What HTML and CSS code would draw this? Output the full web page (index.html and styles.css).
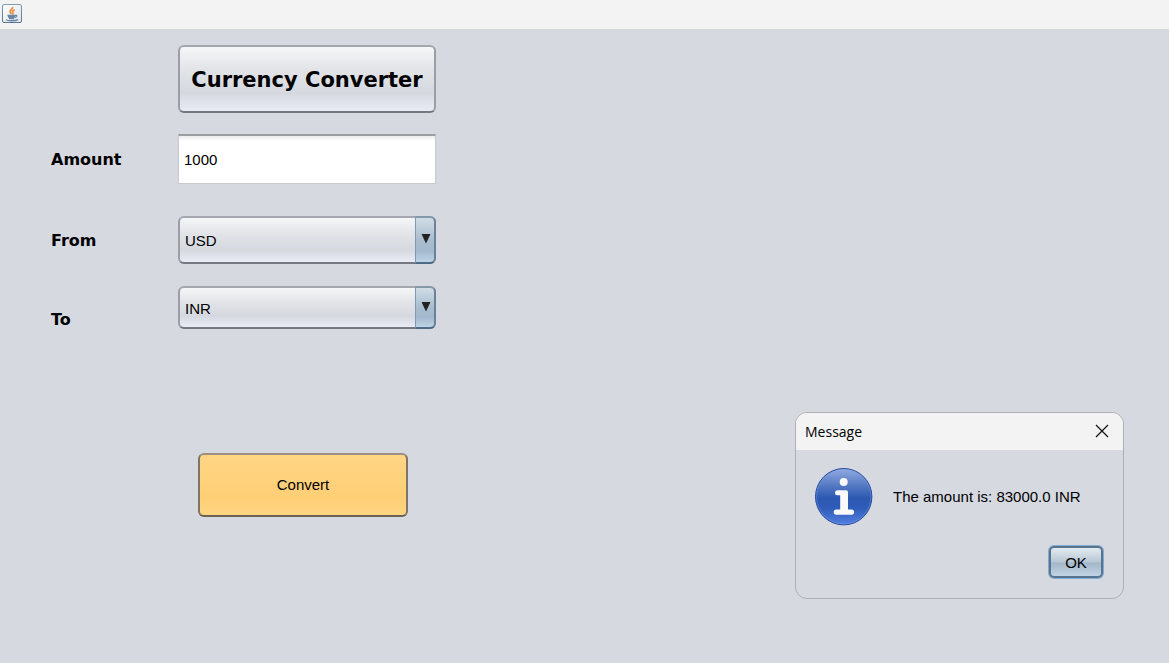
FILE: index.html
```html
<!DOCTYPE html>
<html lang="en">
<head>
<meta charset="utf-8">
<title>Currency Converter</title>
<link rel="stylesheet" href="styles.css">
</head>
<body>
<header class="titlebar">
  <svg class="java-icon" viewBox="0 0 20 20" aria-hidden="true">
    <defs>
      <linearGradient id="frame" x1="0" y1="0" x2="0" y2="1">
        <stop offset="0" stop-color="#7f9db5"/><stop offset="1" stop-color="#56758f"/>
      </linearGradient>
      <linearGradient id="face" x1="0" y1="0" x2="1" y2="1">
        <stop offset="0" stop-color="#ffffff"/><stop offset="1" stop-color="#dfe3e8"/>
      </linearGradient>
    </defs>
    <rect x="0.5" y="0.5" width="19" height="18" rx="1.5" fill="url(#face)" stroke="url(#frame)"/>
    <path d="M10.500 2.800C11.500 5 7.500 5.800 8 8C8.200 9 9.500 9.300 9.500 10.300M12.800 5.800C11 6.500 10 7.300 10.700 8.300C11.300 9.100 11 9.700 10.500 10.300" fill="none" stroke="#ea924a" stroke-width="1.800"/>
    <path d="M5.500 11.500h8M6 13h7M7 14.500h5M13 11.500c2.500-.8 2.500 1.500-.3 2.200M4 15.800c2 1.300 9 1.300 12-.2" fill="none" stroke="#6787a4" stroke-width="1.300"/>
  </svg>
</header>
<main class="workspace">
  <form class="converter">
    <button type="button" class="raised heading">Currency Converter</button>

    <label class="caption" for="amount">Amount</label>
    <input class="amount" id="amount" type="text" value="1000">

    <label class="caption caption-from" for="from">From</label>
    <div class="combo combo-from">
      <select class="raised" id="from"><option>USD</option><option>INR</option></select>
      <span class="combo-arrow"><svg viewBox="0 0 10 10" aria-hidden="true"><path d="M0.500 0H9.500L5 9.500Z"/></svg></span>
    </div>

    <label class="caption caption-to" for="to">To</label>
    <div class="combo combo-to">
      <select class="raised" id="to"><option>INR</option><option>USD</option></select>
      <span class="combo-arrow"><svg viewBox="0 0 10 10" aria-hidden="true"><path d="M0.500 0H9.500L5 9.500Z"/></svg></span>
    </div>

    <button type="button" class="raised convert">Convert</button>
  </form>

  <section class="dialog" role="dialog" aria-labelledby="dialog-title">
    <div class="dialog-bar">
      <h2 id="dialog-title">Message</h2>
      <button type="button" class="close" aria-label="Close"><svg viewBox="0 0 14 14" aria-hidden="true"><path d="M1 1L13 13M13 1L1 13"/></svg></button>
    </div>
    <div class="dialog-content">
      <svg class="info" viewBox="0 0 58 58" aria-hidden="true">
        <defs>
          <linearGradient id="blue" x1="0" y1="0" x2="0" y2="1">
            <stop offset="0" stop-color="#92abdf"/><stop offset="0.300" stop-color="#557ac4"/>
            <stop offset="0.520" stop-color="#2d59b2"/><stop offset="0.700" stop-color="#2f5cb8"/><stop offset="1" stop-color="#5280e0"/>
          </linearGradient>
        </defs>
        <circle cx="28.700" cy="28.700" r="28.200" fill="url(#blue)" stroke="#26489a"/>
        <circle cx="28.700" cy="28.700" r="27.200" fill="none" stroke="#7e9eea" stroke-opacity="0.450"/>
        <circle cx="28.700" cy="14" r="4" fill="#fafafa"/>
        <path d="M22.500 22.300H31a2 2 0 0 1 2 2V41.500H36.500a2.500 2.500 0 0 1 0 5.200H21.300a2.500 2.500 0 0 1 0-5.200H25.200V27.300H22.500a2.500 2.500 0 0 1 0-5Z" fill="#fafafa"/>
      </svg>
      <p>The amount is: 83000.0 INR</p>
    </div>
    <div class="dialog-actions">
      <button type="button" class="raised ok">OK</button>
    </div>
  </section>
</main>
</body>
</html>
```
FILE: styles.css
```css
* { box-sizing: border-box; }

body {
  margin: 0;
  min-height: 100vh;
  display: flex;
  flex-direction: column;
  background: #d6d9e0;
  color: #000;
  font: 15px/20px "Liberation Sans", Arial, sans-serif;
}

button, input, select { font: inherit; color: inherit; }

.titlebar {
  display: flex;
  height: 29px;
  padding: 4px 2px;
  background: #f3f3f3;
}
.java-icon { width: 20px; height: 20px; }

.workspace {
  flex: 1;
  display: flex;
  justify-content: space-between;
  align-items: flex-start;
  padding: 16px 45px 16px 51px;
}

.converter {
  display: grid;
  grid-template-columns: 127px 258px;
  align-items: center;
}

.raised {
  border: 2px solid;
  border-color: #a4a7ad #9b9ea4 #75787e #9b9ea4;
  border-radius: 6px;
  background: linear-gradient(#f5f6f7 0%, #e2e4e8 35%, #d5d8df 72%, #e9ecf5 100%);
}

.heading {
  grid-column: 2;
  height: 68px;
  margin-bottom: 21px;
  padding: 2px 0 0;
  font: bold 21px/28px "DejaVu Sans", Verdana, sans-serif;
}

.caption {
  padding-top: 2px;
  font: bold 16px/20px "DejaVu Sans", Verdana, sans-serif;
}
.caption-from { padding-top: 12px; }
.caption-to { padding-top: 24px; }

.amount {
  width: 100%;
  height: 50px;
  padding: 0 5px;
  border: 1px solid #c8cacf;
  border-top: 2px solid #9b9da1;
  background: linear-gradient(#ececec, #fff 5px);
}

.combo { position: relative; display: flex; }
.combo select {
  flex: 1;
  appearance: none;
  padding: 2px 24px 0 5px;
}
.combo-from { height: 48px; margin: 32px 0 22px; }
.combo-to { height: 43px; align-self: start; }

.combo-arrow {
  position: absolute;
  inset: 0 0 0 auto;
  width: 21px;
  display: flex;
  align-items: center;
  justify-content: center;
  padding: 0 0 2px 1px;
  border: 2px solid;
  border-color: #8498aa #6b8298 #4f6a84 #7f9bb4;
  border-left-width: 1px;
  border-radius: 0 6px 6px 0;
  background: linear-gradient(#d0dde7, #a9bdcf 50%, #a4b9cd 75%, #bcd3e8);
  pointer-events: none;
}
.combo-arrow svg { width: 10px; height: 10px; fill: #222; }

.convert {
  grid-column: 2;
  width: 210px;
  height: 64px;
  margin: 123px 0 0 20px;
  border-color: #9a9182 #7d7566 #6b6255 #7d7566;
  background: linear-gradient(#ffd584, #ffcf76 70%, #ffd582);
}

.dialog {
  width: 329px;
  margin-top: 367px;
  border: 1px solid #aeb0b4;
  border-radius: 12px;
  overflow: hidden;
}
.dialog-bar {
  display: flex;
  align-items: center;
  justify-content: space-between;
  height: 37px;
  padding: 0 14px 0 9px;
  background: #f3f3f3;
}
.dialog-bar h2 {
  margin: 0;
  font: 14px/20px "Open Sans", "Segoe UI", sans-serif;
}
.close {
  display: flex;
  padding: 0 0 2px;
  border: 0;
  background: none;
}
.close svg { width: 14px; height: 14px; fill: none; stroke: #111; stroke-width: 1.2; }

.dialog-content {
  display: flex;
  align-items: center;
  gap: 20px;
  padding: 18px 19px;
}
.dialog-content p { margin: 0; }
.info { width: 58px; height: 58px; }

.dialog-actions {
  display: flex;
  justify-content: flex-end;
  padding: 2px 20px 20px;
}
.ok {
  width: 54px;
  height: 32px;
  padding: 1px 0 0;
  border-color: #58748f;
  border-radius: 5px;
  box-shadow: 0 0 0 1px #7facd3;
  background: linear-gradient(#e4ebf1, #b9c8d5 48%, #a4b8ca 55%, #bfd3e5);
}
```
